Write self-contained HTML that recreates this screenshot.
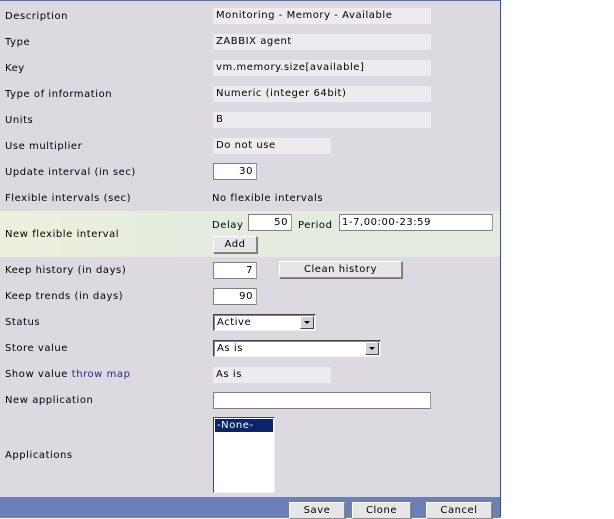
<!DOCTYPE html>
<html><head><meta charset="utf-8"><style>
*{margin:0;padding:0;box-sizing:border-box}
body{width:614px;height:517px;background:#fff;position:relative;overflow:hidden;font-family:"DejaVu Sans","Liberation Sans",sans-serif;font-size:10px;letter-spacing:0.55px;color:#000}
#panel{position:absolute;left:0;top:0;width:501px;height:517px;background:#dcd9e0;border-top:1px solid #5a6ea8;border-right:1px solid #3c4f8c}
.l{position:absolute;left:5px;line-height:12px;white-space:nowrap}
.v{position:absolute;left:213px;height:16px;background:#ecebef;line-height:16px;padding-left:3px;white-space:nowrap}
.i{position:absolute;background:#fff;border:1px solid #7f7f7f;border-right-color:#999;height:17px;line-height:15px;text-align:right;padding-right:3px}
.b{position:absolute;background:#e6e5e8;border:1px solid #8a8a8a;border-top-color:#fff;border-left-color:#fff;box-shadow:1px 1px 0 #777;text-align:center;line-height:15px;height:17px}
.s{position:absolute;background:#fff;border:1px solid #444;border-right-color:#eee;border-bottom-color:#eee;box-shadow:inset 1px 1px 0 #888;height:17px;line-height:15px;padding-left:3px}
.s .ar{position:absolute;right:1px;top:1px;width:14px;height:13px;background:#d4d0d8;border:1px solid #fff;border-right-color:#444;border-bottom-color:#444}
.s .ar:after{content:"";position:absolute;left:3px;top:4px;border-left:3px solid transparent;border-right:3px solid transparent;border-top:3px solid #000}
#band{position:absolute;left:0;top:210px;width:500px;height:46px;background:linear-gradient(90deg,#eef0dc,#e3ecdf 40%,#e3ecdf)}
#bar{position:absolute;left:0;top:496px;width:500px;height:21px;background:#6a80b6}
a{color:#2a2a8c;text-decoration:none}
</style></head><body>
<div id="panel">
<div id="band"></div>
<div class="l" style="top:10px">Description</div><div class="v" style="top:7px;width:218px">Monitoring - Memory - Available</div>
<div class="l" style="top:36px">Type</div><div class="v" style="top:33px;width:218px">ZABBIX agent</div>
<div class="l" style="top:62px">Key</div><div class="v" style="top:59px;width:218px">vm.memory.size[available]</div>
<div class="l" style="top:88px">Type of information</div><div class="v" style="top:85px;width:218px">Numeric (integer 64bit)</div>
<div class="l" style="top:114px">Units</div><div class="v" style="top:111px;width:218px">B</div>
<div class="l" style="top:140px">Use multiplier</div><div class="v" style="top:137px;width:118px">Do not use</div>
<div class="l" style="top:166px">Update interval (in sec)</div><div class="i" style="left:213px;top:162px;width:44px">30</div>
<div class="l" style="top:192px">Flexible intervals (sec)</div><div class="l" style="left:212px;top:192px">No flexible intervals</div>
<div class="l" style="top:228px">New flexible interval</div>
<div class="l" style="left:212px;top:219px">Delay</div><div class="i" style="left:248px;top:213px;width:44px">50</div>
<div class="l" style="left:298px;top:219px">Period</div><div class="i" style="left:339px;top:213px;width:154px;text-align:left;padding-left:2px">1-7,00:00-23:59</div>
<div class="b" style="left:213px;top:235px;width:44px">Add</div>
<div class="l" style="top:264px">Keep history (in days)</div><div class="i" style="left:213px;top:261px;width:44px">7</div>
<div class="b" style="left:279px;top:260px;width:123px">Clean history</div>
<div class="l" style="top:290px">Keep trends (in days)</div><div class="i" style="left:213px;top:287px;width:44px">90</div>
<div class="l" style="top:316px">Status</div><div class="s" style="left:213px;top:313px;width:103px">Active<div class="ar"></div></div>
<div class="l" style="top:342px">Store value</div><div class="s" style="left:213px;top:339px;width:168px">As is<div class="ar"></div></div>
<div class="l" style="top:368px">Show value <a>throw map</a></div><div class="v" style="top:366px;width:118px">As is</div>
<div class="l" style="top:394px">New application</div><div class="i" style="left:213px;top:391px;width:218px"></div>
<div class="l" style="top:449px">Applications</div>
<div style="position:absolute;left:213px;top:416px;width:62px;height:76px;background:#fff;border:1px solid #444;border-right-color:#eee;border-bottom-color:#eee">
<div style="margin:1px;background:#0a246a;color:#fff;height:13px;line-height:13px;padding-left:2px">-None-</div></div>
<div id="bar"></div>
<div class="b" style="left:289px;top:501px;width:56px">Save</div>
<div class="b" style="left:352px;top:501px;width:59px">Clone</div>
<div class="b" style="left:426px;top:501px;width:66px">Cancel</div>
</div>
</body></html>
